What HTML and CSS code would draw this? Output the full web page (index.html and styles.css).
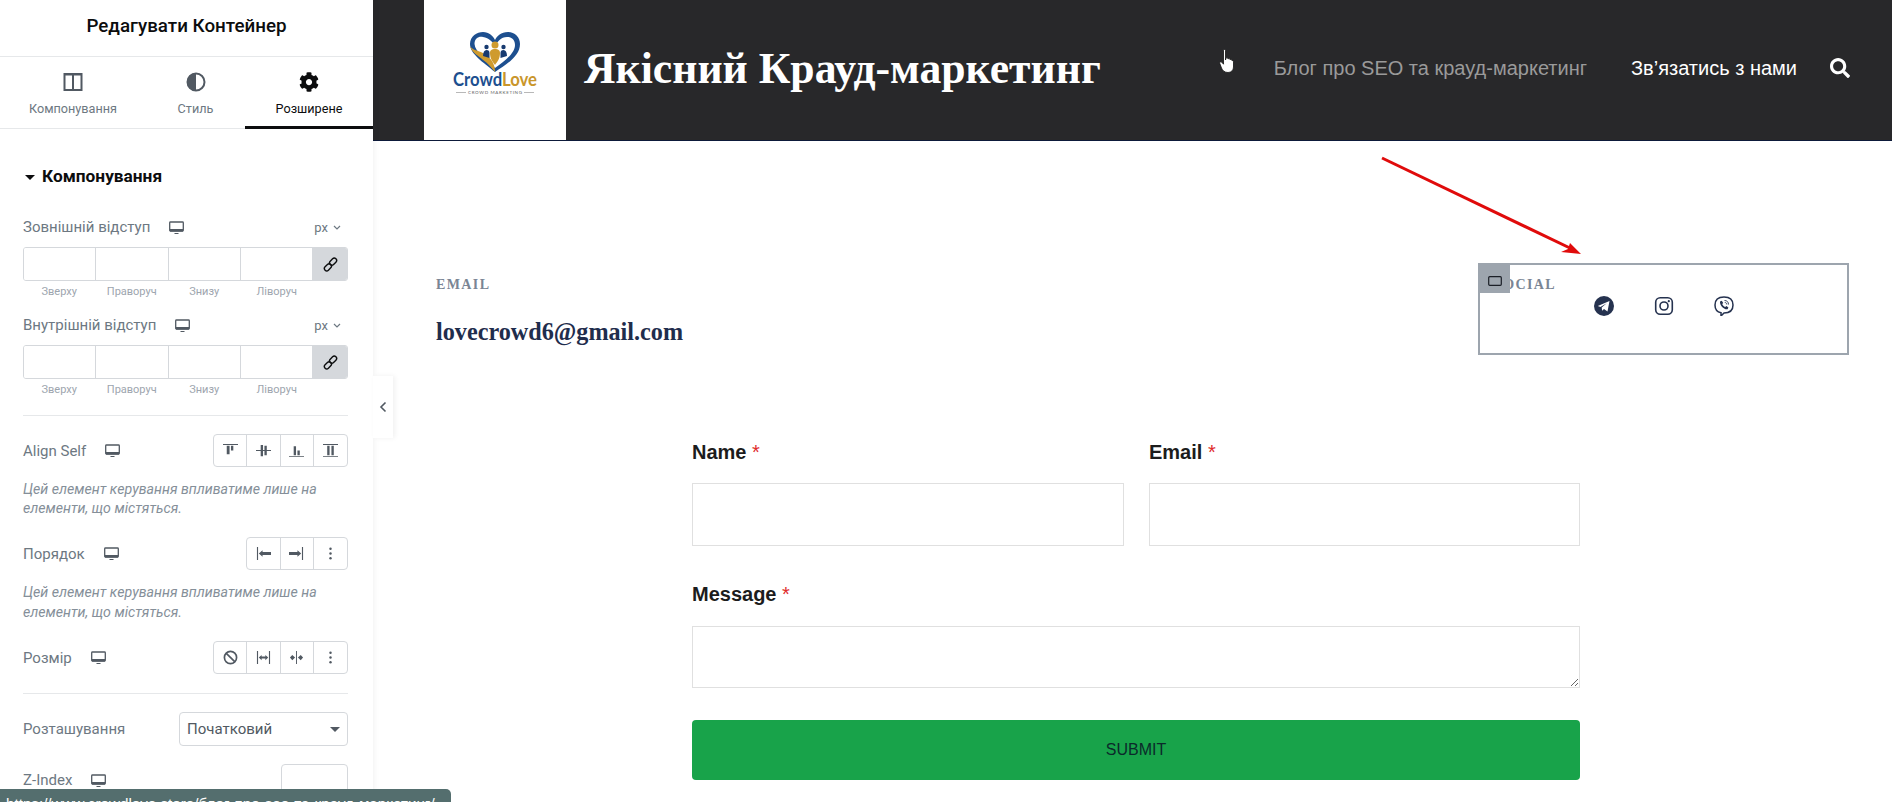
FILE: index.html
```html
<!DOCTYPE html>
<html lang="uk">
<head>
    <meta charset="utf-8">
    <meta name="viewport" content="width=device-width, initial-scale=1.0" />
    <title>Контакти</title>
    <link rel="stylesheet" href="styles.css">
</head>
<body>
    <!-- Editor panel -->
    <aside class="panel">
        <div class="panel-title">Редагувати Контейнер</div>
        <div class="tabs">
            <div class="tab">
                <svg class="tab-icon" viewBox="0 0 20 20"><path d="M1.500 2h17v16h-17z M10 2v16" fill="none" stroke="#515962" stroke-width="2"/><path d="M1 1.500h18v2H1z" fill="#515962"/></svg>
                <span>Компонування</span>
            </div>
            <div class="tab">
                <svg class="tab-icon" viewBox="0 0 20 20"><circle cx="10" cy="10" r="8.500" fill="none" stroke="#515962" stroke-width="2"/><path d="M10 1a9 9 0 0 0 0 18z" fill="#515962"/></svg>
                <span>Стиль</span>
            </div>
            <div class="tab tab-active">
                <svg class="tab-icon" viewBox="0 0 512 512"><path fill="#0c0d0e" d="M487.4 315.7l-42.6-24.6c4.3-23.2 4.3-47 0-70.2l42.6-24.6c4.9-2.8 7.1-8.6 5.5-14-11.1-35.6-30-67.8-54.7-94.6-3.8-4.1-10-5.1-14.8-2.3L380.8 110c-17.9-15.4-38.5-27.3-60.8-35.1V25.8c0-5.6-3.9-10.5-9.4-11.7-36.7-8.2-74.3-7.8-109.2 0-5.5 1.2-9.4 6.1-9.4 11.7V75c-22.2 7.9-42.8 19.8-60.8 35.1L88.7 85.5c-4.9-2.8-11-1.9-14.8 2.3-24.7 26.7-43.6 58.9-54.7 94.6-1.7 5.4.6 11.2 5.5 14L67.3 221c-4.3 23.2-4.3 47 0 70.2l-42.6 24.6c-4.9 2.8-7.1 8.6-5.5 14 11.1 35.6 30 67.8 54.7 94.6 3.8 4.1 10 5.1 14.8 2.3l42.6-24.6c17.9 15.4 38.5 27.3 60.8 35.1v49.2c0 5.6 3.9 10.5 9.4 11.7 36.7 8.2 74.3 7.8 109.2 0 5.5-1.2 9.4-6.1 9.4-11.7v-49.2c22.2-7.9 42.8-19.8 60.8-35.1l42.6 24.6c4.9 2.8 11 1.9 14.8-2.3 24.7-26.7 43.6-58.9 54.7-94.6 1.5-5.5-.7-11.3-5.6-14.1zM256 336c-44.1 0-80-35.9-80-80s35.9-80 80-80 80 35.9 80 80-35.9 80-80 80z"/></svg>
                <span>Розширене</span>
            </div>
        </div>

        <div class="panel-body">
            <h4 class="section-title"><i class="caret caret-dark"></i>Компонування</h4>

            <div class="row row-first">
                <div class="label">Зовнішній відступ <svg class="device" viewBox="0 0 15 13"><path d="M1.500 1h12a.8.8 0 0 1 .8.8v7.400a.8.8 0 0 1-.8.8h-12a.8.8 0 0 1-.8-.8V1.800a.8.8 0 0 1 .8-.8z" fill="none" stroke="#515962" stroke-width="1.300"/><path d="M1 8h13v2.500H1zM5.500 12h4v1h-4z" fill="#515962"/></svg></div>
                <div class="unit">px <svg class="unit-arrow" viewBox="0 0 8 5"><path d="M1 1l3 3 3-3" fill="none" stroke="#6d7882" stroke-width="1.200"/></svg></div>
            </div>
            <div class="dimensions">
                <input class="dim-input" type="text"><input class="dim-input" type="text"><input class="dim-input" type="text"><input class="dim-input" type="text">
                <div class="dim-link"><svg viewBox="0 0 16 16"><g fill="none" stroke="#0c0d0e" stroke-width="1.500"><rect x="1" y="8.500" width="8.500" height="5" rx="2.500" transform="rotate(-45 5.250 11)"/><rect x="6.500" y="2.500" width="8.500" height="5" rx="2.500" transform="rotate(-45 10.750 5)"/></g></svg></div>
            </div>
            <div class="dim-labels"><span>Зверху</span><span>Праворуч</span><span>Знизу</span><span>Ліворуч</span></div>

            <div class="row row-second">
                <div class="label">Внутрішній відступ <svg class="device" viewBox="0 0 15 13"><path d="M1.500 1h12a.8.8 0 0 1 .8.8v7.400a.8.8 0 0 1-.8.8h-12a.8.8 0 0 1-.8-.8V1.800a.8.8 0 0 1 .8-.8z" fill="none" stroke="#515962" stroke-width="1.300"/><path d="M1 8h13v2.500H1zM5.500 12h4v1h-4z" fill="#515962"/></svg></div>
                <div class="unit">px <svg class="unit-arrow" viewBox="0 0 8 5"><path d="M1 1l3 3 3-3" fill="none" stroke="#6d7882" stroke-width="1.200"/></svg></div>
            </div>
            <div class="dimensions">
                <input class="dim-input" type="text"><input class="dim-input" type="text"><input class="dim-input" type="text"><input class="dim-input" type="text">
                <div class="dim-link"><svg viewBox="0 0 16 16"><g fill="none" stroke="#0c0d0e" stroke-width="1.500"><rect x="1" y="8.500" width="8.500" height="5" rx="2.500" transform="rotate(-45 5.250 11)"/><rect x="6.500" y="2.500" width="8.500" height="5" rx="2.500" transform="rotate(-45 10.750 5)"/></g></svg></div>
            </div>
            <div class="dim-labels"><span>Зверху</span><span>Праворуч</span><span>Знизу</span><span>Ліворуч</span></div>

            <hr class="divider divider-top">

            <div class="row row-align">
                <div class="label">Align Self <svg class="device" viewBox="0 0 15 13"><path d="M1.500 1h12a.8.8 0 0 1 .8.8v7.400a.8.8 0 0 1-.8.8h-12a.8.8 0 0 1-.8-.8V1.800a.8.8 0 0 1 .8-.8z" fill="none" stroke="#515962" stroke-width="1.300"/><path d="M1 8h13v2.500H1zM5.500 12h4v1h-4z" fill="#515962"/></svg></div>
                <div class="choices">
                    <div class="choice"><svg viewBox="0 0 16 16"><path d="M0 1h16v1H0zM4 3h3v9H4zM8.500 3h2.500v5H8.500z" fill="#515962"/></svg></div>
                    <div class="choice"><svg viewBox="0 0 16 16"><path d="M0 7.500h16v1H0zM5 2h2.500v12H5zM9 3h2.500v10H9z" fill="#515962"/></svg></div>
                    <div class="choice"><svg viewBox="0 0 16 16"><path d="M0 14h16v1H0zM5 3.500h2.500V13H5zM9 8h2.500v5H9z" fill="#515962"/></svg></div>
                    <div class="choice"><svg viewBox="0 0 16 16"><path d="M0 1h16v1H0zM0 14h16v1H0zM4.500 3H7v10H4.500zM9 3h2.500v10H9z" fill="#515962"/></svg></div>
                </div>
            </div>
            <p class="hint">Цей елемент керування впливатиме лише на елементи, що містяться.</p>

            <div class="row row-order">
                <div class="label">Порядок <svg class="device" viewBox="0 0 15 13"><path d="M1.500 1h12a.8.8 0 0 1 .8.8v7.400a.8.8 0 0 1-.8.8h-12a.8.8 0 0 1-.8-.8V1.800a.8.8 0 0 1 .8-.8z" fill="none" stroke="#515962" stroke-width="1.300"/><path d="M1 8h13v2.500H1zM5.500 12h4v1h-4z" fill="#515962"/></svg></div>
                <div class="choices">
                    <div class="choice"><svg viewBox="0 0 16 16"><path d="M1 1h1.200v14H1zM3 8l4-3.500V6.500h9v3H7v2z" fill="#515962"/></svg></div>
                    <div class="choice"><svg viewBox="0 0 16 16"><path d="M13.800 1H15v14h-1.200zM13 8L9 4.500v2H0v3h9v2z" fill="#515962"/></svg></div>
                    <div class="choice"><svg viewBox="0 0 16 16"><circle cx="8" cy="3" r="1.300" fill="#515962"/><circle cx="8" cy="8" r="1.300" fill="#515962"/><circle cx="8" cy="13" r="1.300" fill="#515962"/></svg></div>
                </div>
            </div>
            <p class="hint hint-order">Цей елемент керування впливатиме лише на елементи, що містяться.</p>

            <div class="row row-size">
                <div class="label">Розмір <svg class="device" viewBox="0 0 15 13"><path d="M1.500 1h12a.8.8 0 0 1 .8.8v7.400a.8.8 0 0 1-.8.8h-12a.8.8 0 0 1-.8-.8V1.800a.8.8 0 0 1 .8-.8z" fill="none" stroke="#515962" stroke-width="1.300"/><path d="M1 8h13v2.500H1zM5.500 12h4v1h-4z" fill="#515962"/></svg></div>
                <div class="choices">
                    <div class="choice"><svg viewBox="0 0 16 16"><circle cx="8" cy="8" r="6.500" fill="none" stroke="#515962" stroke-width="1.800"/><path d="M3.500 3.500l9 9" stroke="#515962" stroke-width="1.800"/></svg></div>
                    <div class="choice"><svg viewBox="0 0 16 16"><path d="M1 1h1.200v14H1zM13.800 1H15v14h-1.200zM3 8l3-2.800V7h4V5.200L13 8l-3 2.800V9H6v1.800z" fill="#515962"/></svg></div>
                    <div class="choice"><svg viewBox="0 0 16 16"><path d="M7.500 1h1v14h-1zM1 8l2.500-2.800L6.500 8l-3 2.800zM9.500 8l3-2.800L15 8l-2.500 2.800z" fill="#515962"/></svg></div>
                    <div class="choice"><svg viewBox="0 0 16 16"><circle cx="8" cy="3" r="1.300" fill="#515962"/><circle cx="8" cy="8" r="1.300" fill="#515962"/><circle cx="8" cy="13" r="1.300" fill="#515962"/></svg></div>
                </div>
            </div>

            <hr class="divider divider-size">

            <div class="row row-select">
                <div class="label">Розташування</div>
                <div class="select-box">Початковий<i class="caret"></i></div>
            </div>
            <div class="row row-z">
                <div class="label">Z-Index <svg class="device" viewBox="0 0 15 13"><path d="M1.500 1h12a.8.8 0 0 1 .8.8v7.400a.8.8 0 0 1-.8.8h-12a.8.8 0 0 1-.8-.8V1.800a.8.8 0 0 1 .8-.8z" fill="none" stroke="#515962" stroke-width="1.300"/><path d="M1 8h13v2.500H1zM5.500 12h4v1h-4z" fill="#515962"/></svg></div>
                <input class="z-input" type="text">
            </div>
        </div>
        <div class="panel-toggle"><svg viewBox="0 0 8 12"><path d="M6.500 1.500L2 6l4.500 4.500" fill="none" stroke="#515962" stroke-width="1.600"/></svg></div>
    </aside>

    <main class="page">
        <header class="site-header">
            <div class="logo">
                <svg viewBox="0 0 84 68" width="84" height="68">
                    <path d="M42 40C30 30 17 22 17 12 17 4 24 0 30 0c6 0 10 4 12 8 2-4 6-8 13-8 7 0 12 5 12 12 0 12-13 20-25 28z" fill="#1d4f8f"/>
                    <path d="M42 36C34 28 22 20 21.500 12 21.500 6 26 4 30 5c6 1 10 5 12 9 2-4 6-9 12-9 6 0 8 4 8 8 0 9-12 17-20 23z" fill="#fff"/>
                    <path d="M17 14c3 10 13 10 25 26 0-8-4-15-12-19-6-3-11-3-13-7z" fill="#cf9b2e"/>
                    <circle cx="42" cy="13" r="3.500" fill="#cf9b2e"/>
                    <path d="M37 21c0-3 2-4 5-4s5 1 5 4c0 6-3 9-5 12-2-3-5-6-5-12z" fill="#cf9b2e"/>
                    <circle cx="33.500" cy="15" r="2.200" fill="#173a70"/>
                    <circle cx="50.500" cy="15" r="2.200" fill="#173a70"/>
                    <path d="M30 24c0-4 1.500-6 3.500-6s3 1 3 3v5zM54 24c0-4-1.500-6-3.500-6s-3 1-3 3v5z" fill="#173a70"/>
                    <text class="logo-word" x="0" y="54" textLength="84" lengthAdjust="spacingAndGlyphs"><tspan fill="#1d4f8f">Crowd</tspan><tspan fill="#c9962b">Love</tspan></text>
                    <path d="M3 60.500h10M71 60.500h10" stroke="#888" stroke-width=".6"/>
                    <text class="logo-sub" x="42" y="62" text-anchor="middle" textLength="54">CROWD MARKETING</text>
                </svg>
            </div>
            <div class="site-title">Якісний Крауд-маркетинг</div>
            <nav class="nav">
                <a class="nav-link">Блог про SEO та крауд-маркетинг</a>
                <a class="nav-link nav-current">Зв’язатись з нами</a>
                <svg class="nav-search" viewBox="0 0 512 512"><path fill="#fff" d="M505 442.700L405.300 343c-4.500-4.500-10.600-7-17-7H372c27.600-35.300 44-79.700 44-128C416 93.100 322.900 0 208 0S0 93.100 0 208s93.100 208 208 208c48.300 0 92.700-16.400 128-44v16.300c0 6.400 2.500 12.500 7 17l99.700 99.700c9.400 9.400 24.600 9.400 33.900 0l28.300-28.300c9.400-9.400 9.400-24.600.1-34zM208 336c-70.700 0-128-57.200-128-128 0-70.700 57.200-128 128-128 70.700 0 128 57.200 128 128 0 70.700-57.200 128-128 128z"/></svg>
            </nav>
        </header>

        <section class="contacts">
            <div class="contact-email">
                <div class="contact-label">EMAIL</div>
                <div class="contact-value">lovecrowd6@gmail.com</div>
            </div>
            <div class="contact-social">
                <div class="social-tag"><svg viewBox="0 0 14 10" width="14" height="10"><rect x=".7" y=".7" width="12.600" height="8.600" rx="1" fill="none" stroke="#1b1f27" stroke-width="1.200"/></svg></div>
                <div class="contact-label">SOCIAL</div>
                <div class="social-icons">
                    <svg viewBox="0 0 20 20"><circle cx="10" cy="10" r="10" fill="#25324f"/><path d="M3.800 10l11.700-5-2 10.500-3.500-2.600-1.900 1.900-.4-3.200 5-4.400-6.300 3.700z" fill="#fff"/></svg>
                    <svg viewBox="0 0 20 20"><rect x="1.700" y="1.700" width="16.600" height="16.600" rx="4.500" fill="none" stroke="#25324f" stroke-width="1.600"/><circle cx="10" cy="10" r="4" fill="none" stroke="#25324f" stroke-width="1.600"/><circle cx="14.800" cy="5.200" r="1.100" fill="#25324f"/></svg>
                    <svg viewBox="0 0 20 20"><path d="M10 1c5 0 9 1.500 9 8 0 6-4 8-9 8l-3 3v-3.300C3 16 1 13.500 1 9c0-6.500 4-8 9-8z" fill="none" stroke="#25324f" stroke-width="1.500"/><path d="M6 5.500l1.800-.8 1.400 2.200-1 1.200c.6 1.500 1.500 2.400 3 3l1.200-1 2 1.500-.8 1.700c-4 .5-8-4-7.600-7.800z" fill="#25324f"/><path d="M10.500 4.500c2.500 0 4 1.500 4 4M10.800 6.500c1.200 0 2 .8 2 2" fill="none" stroke="#25324f" stroke-width=".9"/></svg>
                </div>
            </div>
        </section>

        <form class="contact-form">
            <div class="field">
                <label class="field-label">Name <span class="req">*</span></label>
                <input class="field-input" type="text">
            </div>
            <div class="field">
                <label class="field-label">Email <span class="req">*</span></label>
                <input class="field-input" type="text">
            </div>
            <div class="field field-wide">
                <label class="field-label">Message <span class="req">*</span></label>
                <textarea class="field-input field-area"></textarea>
            </div>
            <button class="submit-btn" type="button">SUBMIT</button>
        </form>
    </main>

    <!-- Things lying over the page -->
    <svg class="annotation" viewBox="0 0 210 105" width="210" height="105">
        <path d="M2 3l190 91" stroke="#e00b0b" stroke-width="3" fill="none"/>
        <path d="M201 99l-11-11-2 6-7 3z" fill="#e00b0b"/>
    </svg>
    <svg class="hand-cursor" viewBox="0 0 16 24" width="16" height="24">
        <path d="M4.500 1.500c0-1.300 2-1.300 2 0V11l.5-2c1-.6 2 0 2 1 .8-.8 2-.4 2 .6.800-.5 2 0 2 1 .8-.2 1.500.4 1.500 1.300V18c0 3-2 5.500-5.500 5.500S3.500 21.500 2.500 19L.8 14.500c-.5-1.500 1-2.300 2-1.300l1.700 2z" fill="#fff" stroke="#111" stroke-width=".8"/>
    </svg>
    <div class="status-tip">https://www.crowdlove.store/блог-про-seo-та-крауд-маркетинг/</div>
</body>
</html>
```

FILE: styles.css
```css
* {
    padding: 0;
    margin: 0;
    box-sizing: border-box;
}
html, body {
    height: 100%;
    overflow: hidden;
}
body {
    display: flex;
    position: relative;
    background-color: #ffffff;
    font-family: "Liberation Sans", Arial, sans-serif;
}

/* Editor panel */
.panel {
    position: relative;
    flex: 0 0 373px;
    height: 802px;
    background-color: #ffffff;
    font-family: Roboto, "Liberation Sans", sans-serif;
    box-shadow: 1px 0 6px rgba(0, 0, 0, 0.06);
    z-index: 2;
}
.panel-title {
    height: 57px;
    border-bottom: 1px solid #e6e8ea;
    text-align: center;
    font-size: 18.800px;
    font-weight: 500;
    line-height: 52px;
    color: #0c0d0e;
}
.tabs {
    display: grid;
    grid-template-columns: 146px 99px 128px;
    height: 72px;
    border-bottom: 1px solid #e6e8ea;
}
.tab {
    display: flex;
    flex-direction: column;
    align-items: center;
    padding-top: 15px;
    font-size: 12.650px;
    color: #6d7882;
}
.tab-active {
    color: #0c0d0e;
    border-bottom: 3px solid #0c0d0e;
    margin-bottom: -1px;
}
.tab-icon {
    width: 20px;
    height: 20px;
    margin-bottom: 9px;
}
.panel-body {
    padding: 0 25px 0 23px;
    height: 673px;
    overflow: hidden;
}
.section-title {
    display: flex;
    align-items: center;
    margin-top: 37px;
    height: 20px;
    font-size: 17.300px;
    font-weight: 700;
    color: #0c0d0e;
}
.caret {
    display: inline-block;
    width: 0;
    height: 0;
    border-left: 5px solid transparent;
    border-right: 5px solid transparent;
    border-top: 5px solid #515962;
}
.caret-dark {
    border-top-color: #0c0d0e;
    margin: 2px 7px 0 2px;
}
.row {
    display: flex;
    align-items: center;
    justify-content: space-between;
}
.row-first {
    height: 20px;
    margin-top: 31px;
}
.row-second {
    height: 20px;
    margin-top: 16px;
}
.label {
    display: flex;
    align-items: center;
    font-size: 15px;
    color: #6d7882;
}
.device {
    width: 15px;
    height: 13px;
    margin-left: 19px;
}
.unit {
    display: flex;
    align-items: center;
    padding-right: 7px;
    font-size: 13px;
    color: #6d7882;
}
.unit-arrow {
    width: 8px;
    height: 5px;
    margin-left: 5px;
}
.dimensions {
    display: flex;
    height: 34px;
    margin-top: 10px;
    border: 1px solid #d5d8dc;
    border-radius: 3px;
    overflow: hidden;
}
.dim-input {
    width: 72.250px;
    height: 100%;
    border: none;
    border-right: 1px solid #d5d8dc;
    outline: none;
    background-color: #ffffff;
}
.dim-link {
    flex: 1;
    display: flex;
    align-items: center;
    justify-content: center;
    background-color: #d5d8dc;
}
.dim-link svg {
    width: 15px;
    height: 15px;
}
.dim-labels {
    display: flex;
    width: 290px;
    height: 14px;
    margin-top: 4px;
    font-size: 11px;
    line-height: 14px;
    color: #9da5ae;
}
.dim-labels span {
    flex: 1;
    text-align: center;
}
.divider {
    border: none;
    border-top: 1px solid #e6e8ea;
}
.divider-top {
    margin-top: 18px;
}
.divider-size {
    margin-top: 19px;
}
.row-align {
    margin-top: 18px;
}
.row-order {
    margin-top: 19px;
}
.row-size {
    margin-top: 19px;
}
.choices {
    display: flex;
    height: 33px;
    border: 1px solid #d5d8dc;
    border-radius: 4px;
}
.choice {
    width: 33.250px;
    display: flex;
    align-items: center;
    justify-content: center;
    border-right: 1px solid #d5d8dc;
}
.choice:last-child {
    border-right: none;
}
.choice svg {
    width: 15px;
    height: 15px;
}
.hint {
    margin-top: 13px;
    font-size: 14.200px;
    font-style: italic;
    line-height: 19px;
    color: #858f99;
}
.hint-order {
    margin-top: 12px;
    line-height: 20px;
}
.row-select {
    margin-top: 18px;
}
.select-box {
    width: 169px;
    height: 34px;
    display: flex;
    align-items: center;
    justify-content: space-between;
    padding: 0 7px 0 7px;
    border: 1px solid #d5d8dc;
    border-radius: 4px;
    font-size: 15px;
    color: #515962;
}
.row-z {
    margin-top: 18px;
    align-items: flex-start;
}
.row-z .label {
    padding-top: 7px;
}
.z-input {
    width: 67px;
    height: 34px;
    border: 1px solid #d5d8dc;
    border-radius: 4px;
    outline: none;
}
.panel-toggle {
    position: absolute;
    left: 373px;
    top: 376px;
    width: 20px;
    height: 62px;
    display: flex;
    align-items: center;
    justify-content: center;
    background-color: #ffffff;
    box-shadow: 2px 0 5px rgba(0, 0, 0, 0.06);
}
.panel-toggle svg {
    width: 8px;
    height: 12px;
}

/* Page */
.page {
    flex: 1;
    min-width: 0;
}
.site-header {
    display: flex;
    align-items: center;
    height: 141px;
    padding-left: 51px;
    background-color: #28282a;
    border-bottom: 1px solid #0d1a3a;
}
.logo {
    flex: 0 0 142px;
    height: 140px;
    display: flex;
    align-items: flex-start;
    justify-content: center;
    padding-top: 32px;
    background-color: #ffffff;
}
.logo-word {
    font-family: Lato, sans-serif;
    font-weight: 700;
    font-size: 18px;
}
.logo-sub {
    font-family: Lato, sans-serif;
    font-size: 4.500px;
    fill: #666666;
}
.site-title {
    margin: 0 0 5px 18px;
    font-family: "Liberation Serif", serif;
    font-size: 43.700px;
    font-weight: 700;
    color: #ffffff;
}
.nav {
    display: flex;
    align-items: center;
    margin: 0 0 4px auto;
    padding-right: 42px;
    font-size: 20px;
}
.nav-link {
    color: #9a9a9a;
    margin-right: 44px;
}
.nav-current {
    color: #ffffff;
    margin-right: 33px;
}
.nav-search {
    width: 20px;
    height: 20px;
}
.contacts {
    display: flex;
    justify-content: space-between;
    margin-top: 122px;
    padding: 0 43px 0 63px;
}
.contact-email {
    padding-top: 13px;
}
.contact-label {
    font-family: "Liberation Serif", serif;
    font-size: 14px;
    font-weight: 700;
    letter-spacing: 1.400px;
    line-height: 18px;
    color: #7a8594;
}
.contact-value {
    margin-top: 24px;
    font-family: "Liberation Serif", serif;
    font-size: 24.200px;
    font-weight: 700;
    color: #1f2d4d;
}
.contact-social {
    position: relative;
    width: 371px;
    height: 92px;
    padding: 11px 0 0 14px;
    border: 2px solid #9da5ae;
}
.social-tag {
    position: absolute;
    left: 0;
    top: 0;
    width: 30px;
    height: 28px;
    display: flex;
    justify-content: center;
    padding-top: 11px;
    background-color: #9da5ae;
}
.social-icons {
    display: flex;
    justify-content: center;
    gap: 40px;
    margin: 2px 0 0 -14px;
}
.social-icons svg {
    width: 20px;
    height: 20px;
}
.contact-form {
    display: grid;
    grid-template-columns: 432px 431px;
    column-gap: 25px;
    width: 888px;
    margin: 85px 0 0 319px;
}
.field-wide {
    grid-column: 1 / 3;
    margin-top: 36px;
}
.field-label {
    display: block;
    height: 24px;
    font-size: 20px;
    font-weight: 700;
    line-height: 24px;
    color: #1c1c1c;
}
.req {
    font-weight: 400;
    color: #e02b2b;
}
.field-input {
    display: block;
    width: 100%;
    height: 63px;
    margin-top: 19px;
    border: 1px solid #e0e0e0;
    outline: none;
    background-color: #ffffff;
}
.field-area {
    height: 62px;
    margin-top: 20px;
}
.submit-btn {
    grid-column: 1 / 3;
    height: 60px;
    margin-top: 32px;
    border: none;
    border-radius: 4px;
    background-color: #18a34a;
    font-family: "Liberation Sans", Arial, sans-serif;
    font-size: 16px;
    color: #0b2a2a;
}

/* Overlays */
.annotation {
    position: absolute;
    left: 1380px;
    top: 155px;
    z-index: 3;
}
.hand-cursor {
    position: absolute;
    left: 1219px;
    top: 49px;
    z-index: 3;
}
.status-tip {
    position: absolute;
    left: 0;
    top: 789px;
    width: 451px;
    height: 30px;
    padding: 6px 6px;
    border-radius: 0 5px 0 0;
    background-color: #546e6e;
    font-family: "Liberation Sans", Arial, sans-serif;
    font-size: 15.200px;
    line-height: 18px;
    white-space: nowrap;
    color: #ffffff;
    z-index: 4;
}
```
